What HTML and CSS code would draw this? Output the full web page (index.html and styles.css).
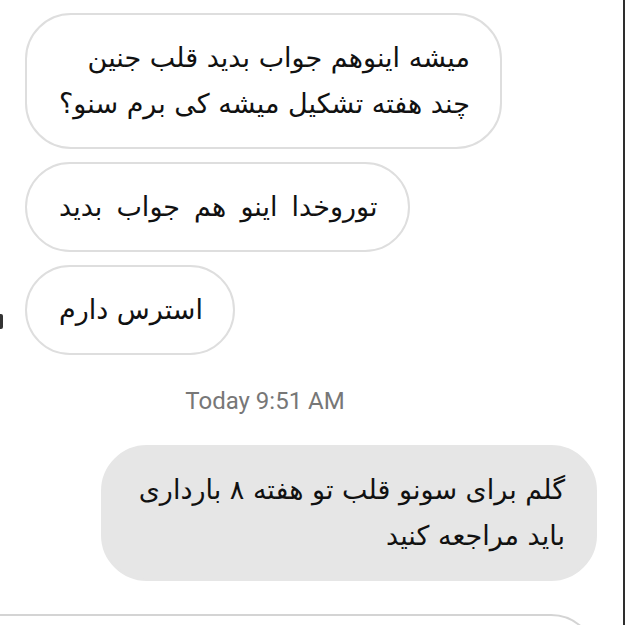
FILE: index.html
```html
<!DOCTYPE html>
<html lang="fa">
<head>
    <meta charset="UTF-8">
    <meta name="viewport" content="width=device-width, initial-scale=1.0">
    <title>Chat</title>
    <link rel="stylesheet" href="styles.css">
</head>
<body>
    <div class="screen">
        <div class="thread">
            <div class="bubble in partial-top">&nbsp;</div>

            <div class="bubble in">میشه اینوهم جواب بدید قلب جنین<br>چند هفته تشکیل میشه کی برم سنو؟</div>

            <div class="bubble in wide-words">توروخدا اینو هم جواب بدید</div>

            <div class="row">
                <span class="avatar-edge"></span>
                <div class="bubble in">استرس دارم</div>
            </div>

            <div class="stamp">Today 9:51 AM</div>

            <div class="bubble out">گلم برای سونو قلب تو هفته ۸ بارداری<br>باید مراجعه کنید</div>

            <div class="bubble partial-bottom">&nbsp;</div>
        </div>
    </div>
</body>
</html>
```

FILE: styles.css
```css
body {
    margin: 0;
    background-color: #fff;
}
.screen {
    width: 623px;
    height: 625px;
    border-right: 2px solid #2e2e2e;
    overflow: hidden;
    background-color: #fff;
}
.thread {
    display: flex;
    flex-direction: column;
    align-items: flex-start;
    gap: 13px;
    padding-left: 25px;
}
.bubble {
    font-family: "DejaVu Sans", sans-serif;
    font-size: 27px;
    line-height: 46px;
    color: #111;
    direction: rtl;
    text-align: right;
    padding: 20px 30px 20px 32px;
    border: 2px solid #dedede;
    border-radius: 46px;
    background-color: #fff;
    white-space: nowrap;
}
.wide-words {
    word-spacing: 5.5px;
}
.bubble.out {
    align-self: flex-end;
    margin-right: 26px;
    padding-left: 36px;
    border-color: #e6e6e6;
    background-color: #e6e6e6;
}
.partial-top {
    width: 122px;
    margin-top: -90px;
}
.partial-bottom {
    align-self: flex-end;
    margin-right: 26px;
    margin-top: 20px;
    width: 620px;
    height: 80px;
    border-color: #d4d4d4;
}
.row {
    display: flex;
    align-items: flex-end;
    margin-left: -25px;
}
.avatar-edge {
    width: 3px;
    height: 15px;
    margin: 0 22px 26px 0;
    background-color: #333;
    border-radius: 0 2px 2px 0;
}
.stamp {
    width: 530px;
    margin: 18px 0 16px -25px;
    font-family: Roboto, sans-serif;
    font-size: 24px;
    line-height: 30px;
    color: #777;
    text-align: center;
}
```
